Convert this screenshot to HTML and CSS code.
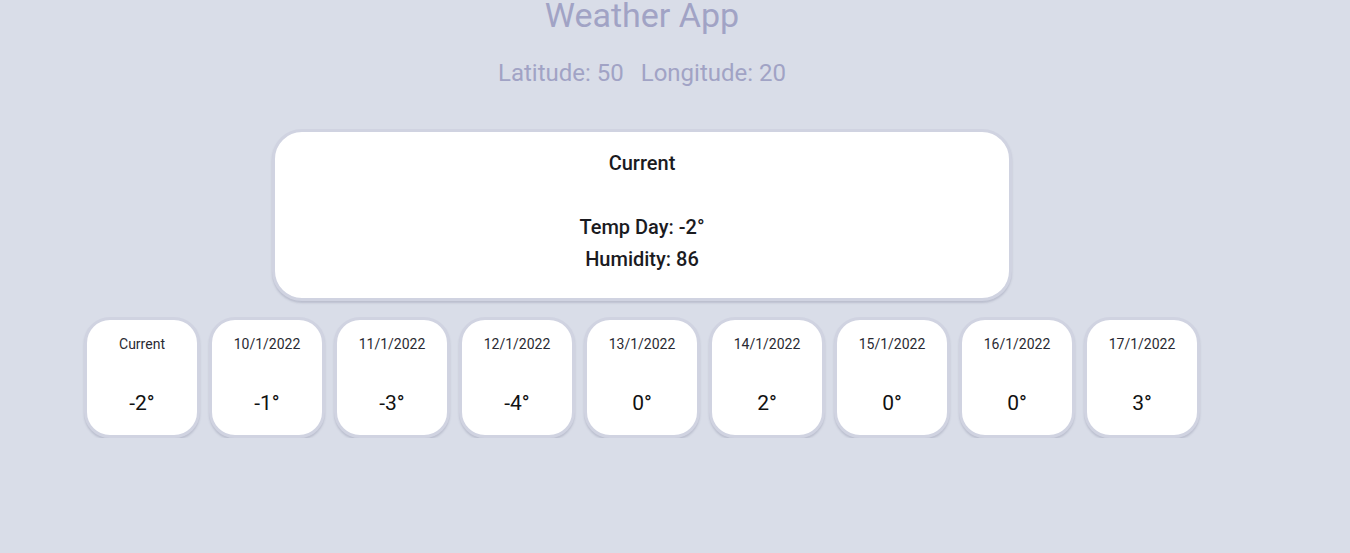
FILE: index.html
```html
<!DOCTYPE html>
<html>
<head>
<meta charset="utf-8">
<link rel="stylesheet" href="styles.css">
</head>
<body>
<div class="app">
  <h1 class="title">Weather App</h1>
  <div class="coords"><span>Latitude: 50</span><span>Longitude: 20</span></div>
  <div class="main-card">
    <div class="main-head">Current</div>
    <div class="main-line">Temp Day: -2°</div>
    <div class="main-line">Humidity: 86</div>
  </div>
  <div class="days">
    <div class="day"><div class="day-date">Current</div><div class="day-temp">-2°</div></div>
    <div class="day"><div class="day-date">10/1/2022</div><div class="day-temp">-1°</div></div>
    <div class="day"><div class="day-date">11/1/2022</div><div class="day-temp">-3°</div></div>
    <div class="day"><div class="day-date">12/1/2022</div><div class="day-temp">-4°</div></div>
    <div class="day"><div class="day-date">13/1/2022</div><div class="day-temp">0°</div></div>
    <div class="day"><div class="day-date">14/1/2022</div><div class="day-temp">2°</div></div>
    <div class="day"><div class="day-date">15/1/2022</div><div class="day-temp">0°</div></div>
    <div class="day"><div class="day-date">16/1/2022</div><div class="day-temp">0°</div></div>
    <div class="day"><div class="day-date">17/1/2022</div><div class="day-temp">3°</div></div>
  </div>
</div>
</body>
</html>
```
FILE: styles.css
```css
html, body {
  margin: 0;
  padding: 0;
  background: #d9dde8;
  font-family: Roboto, "Liberation Sans", sans-serif;
}
.app {
  width: 1284px;
  display: flex;
  flex-direction: column;
  align-items: center;
}
.title {
  margin: 0;
  font-size: 34px;
  font-weight: 400;
  line-height: 30px;
  color: #a1a3c5;
}
.coords {
  margin-top: 29px;
  display: flex;
  gap: 17px;
  font-size: 24px;
  line-height: 28px;
  color: #a1a3c5;
}
.main-card {
  margin-top: 42px;
  width: 740px;
  height: 172px;
  box-sizing: border-box;
  background: #fff;
  border: 3px solid #d0d3e1;
  border-radius: 30px;
  box-shadow: 0 2px 2px rgba(120, 124, 150, 0.3);
  display: flex;
  flex-direction: column;
  align-items: center;
  color: #1b1b1f;
  font-weight: 500;
  font-size: 20px;
  line-height: 32px;
  padding-top: 15px;
}
.main-head {
  margin-bottom: 32px;
}
.days {
  align-self: flex-start;
  margin-left: 84px;
  margin-top: 16px;
  display: flex;
  gap: 9px;
}
.day {
  width: 116px;
  height: 121px;
  box-sizing: border-box;
  background: #fff;
  border: 3px solid #d0d3e1;
  border-radius: 26px;
  box-shadow: 0 2px 2px rgba(120, 124, 150, 0.3);
  display: flex;
  flex-direction: column;
  align-items: center;
}
.day-date {
  margin-top: 15px;
  font-size: 14px;
  line-height: 18px;
  color: #2a2a33;
}
.day-temp {
  margin-top: 37px;
  font-size: 21px;
  line-height: 26px;
  color: #111;
}
```
